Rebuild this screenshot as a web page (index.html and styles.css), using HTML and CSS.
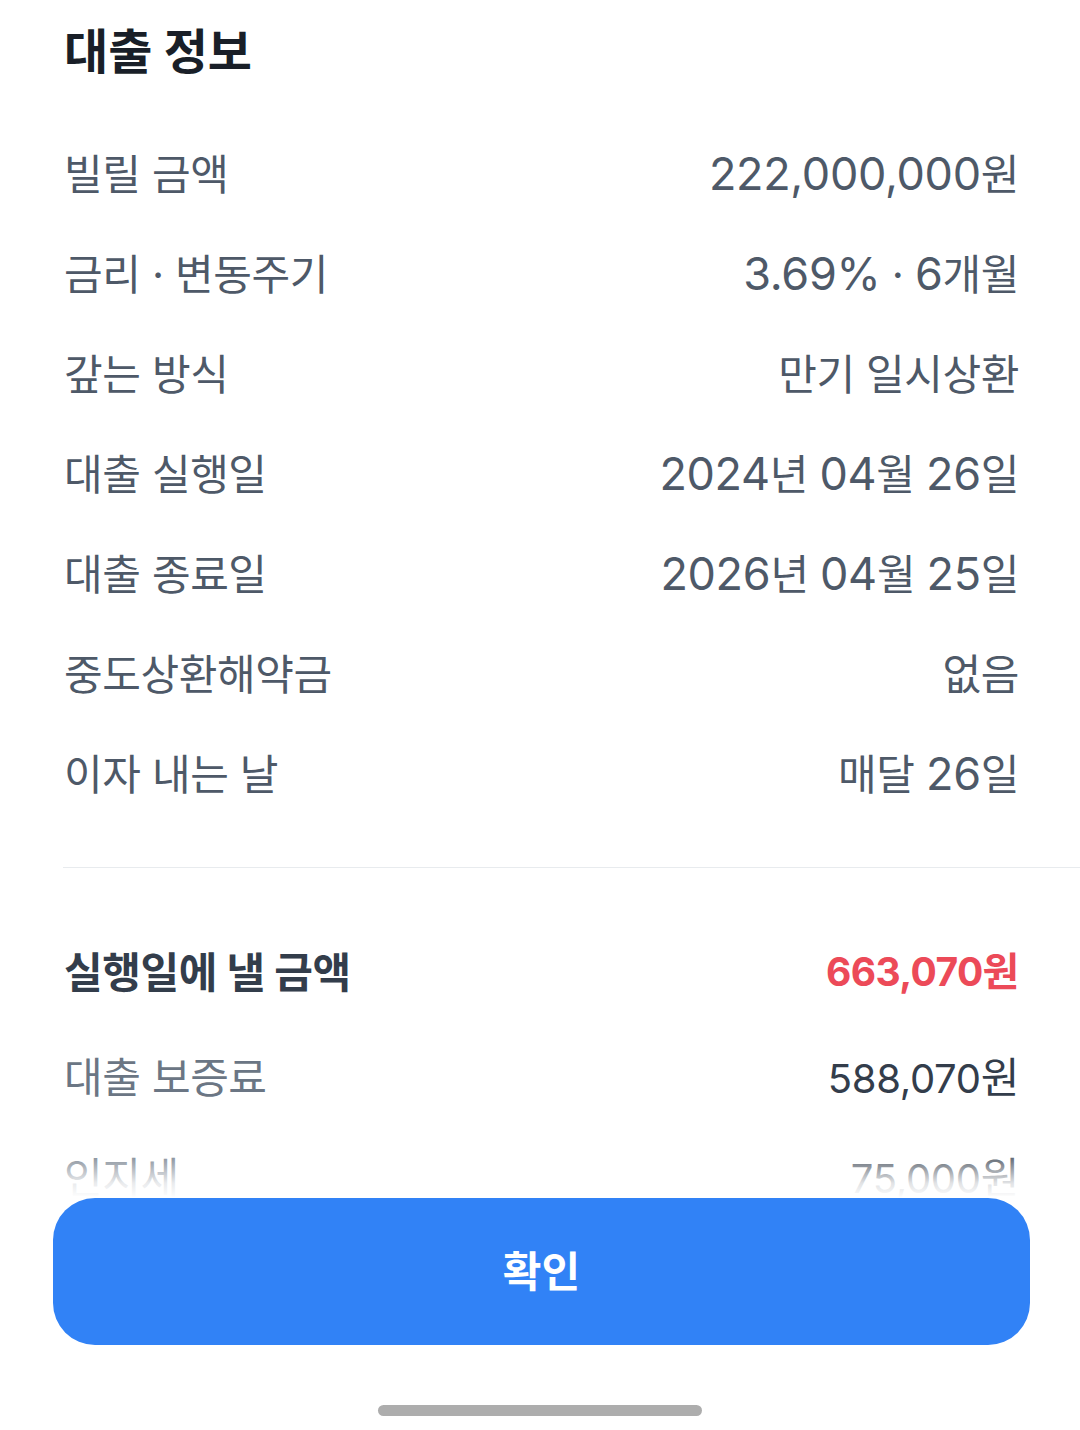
FILE: index.html
```html
<!DOCTYPE html>
<html lang="ko">
<head>
<meta charset="utf-8">
<link rel="stylesheet" href="styles.css">
</head>
<body>
<div class="page">
  <h1 class="title">대출 정보</h1>
  <div class="list">
    <div class="row"><span class="label">빌릴 금액</span><span class="value"><span class="num">222,000,000</span>원</span></div>
    <div class="row"><span class="label">금리 · 변동주기</span><span class="value"><span class="num">3.69%</span> · <span class="num">6</span>개월</span></div>
    <div class="row"><span class="label">갚는 방식</span><span class="value">만기 일시상환</span></div>
    <div class="row"><span class="label">대출 실행일</span><span class="value"><span class="num">2024</span>년 <span class="num">04</span>월 <span class="num">26</span>일</span></div>
    <div class="row"><span class="label">대출 종료일</span><span class="value"><span class="num">2026</span>년 <span class="num">04</span>월 <span class="num">25</span>일</span></div>
    <div class="row"><span class="label">중도상환해약금</span><span class="value">없음</span></div>
    <div class="row"><span class="label">이자 내는 날</span><span class="value">매달 <span class="num">26</span>일</span></div>
  </div>
  <div class="divider"></div>
  <div class="summary">
    <div class="row row-total"><span class="label">실행일에 낼 금액</span><span class="value"><span class="num">663,070</span>원</span></div>
    <div class="row row-sub"><span class="label">대출 보증료</span><span class="value"><span class="num">588,070</span>원</span></div>
    <div class="row row-sub"><span class="label">인지세</span><span class="value"><span class="num">75,000</span>원</span></div>
  </div>
  <div class="bottom">
    <div class="fade"></div>
    <div class="bottom-inner">
      <button class="confirm" type="button">확인</button>
      <div class="home-bar"><span></span></div>
    </div>
  </div>
</div>
</body>
</html>
```

FILE: styles.css
```css
* { box-sizing: border-box; }
html, body {
  margin: 0;
  padding: 0;
  background: #ffffff;
}
body {
  font-family: "Inter", "Noto Sans CJK KR", sans-serif;
  -webkit-font-smoothing: antialiased;
}
.page {
  position: relative;
  width: 1080px;
  height: 1430px;
  overflow: hidden;
  background: #fff;
}
.title {
  margin: 0 0 21px;
  padding: 0 61px 0 64px;
  height: 104px;
  line-height: 104px;
  font-size: 48px;
  font-weight: 700;
  color: #191f28;
}
.list, .summary {
  padding: 0 61px 0 64px;
}
.row {
  display: flex;
  justify-content: space-between;
  align-items: center;
  height: 100px;
  padding-bottom: 8px;
  font-size: 42px;
  color: #4e5968;
  letter-spacing: -0.4px;
}
.num {
  font-size: 45px;
  letter-spacing: -0.3px;
}
.divider {
  margin: 42px 0 0 63px;
  height: 1px;
  background: #e8ebee;
}
.summary {
  padding-top: 50px;
}
.row-total {
  height: 110px;
  color: #333d4b;
  font-weight: 700;
}
.row-total .value {
  color: #ec4a58;
  font-size: 40px;
}
.row-total .num {
  font-size: 39px;
  letter-spacing: -0.6px;
}
.row-sub .label {
  color: #6b7684;
}
.row-sub .value {
  color: #333d4b;
}
.row-sub .num {
  font-size: 40px;
}
.bottom {
  position: absolute;
  left: 0;
  right: 0;
  bottom: 0;
}
.fade {
  height: 50px;
  background: linear-gradient(to bottom, rgba(255,255,255,0) 0%, rgba(255,255,255,0.85) 70%, #fff 100%);
}
.bottom-inner {
  background: #fff;
  padding: 0 50px 0 53px;
}
.confirm {
  display: block;
  width: 977px;
  height: 147px;
  padding: 0 0 6px;
  border: 0;
  border-radius: 42px;
  background: #3182f6;
  color: #fff;
  font-family: "Inter", "Noto Sans CJK KR", sans-serif;
  font-size: 42px;
  font-weight: 600;
  cursor: pointer;
}
.home-bar {
  display: flex;
  justify-content: center;
  padding: 60px 0 14px;
  margin-left: -3px;
}
.home-bar span {
  display: block;
  width: 324px;
  height: 11px;
  border-radius: 6px;
  background: #adadad;
}
```
